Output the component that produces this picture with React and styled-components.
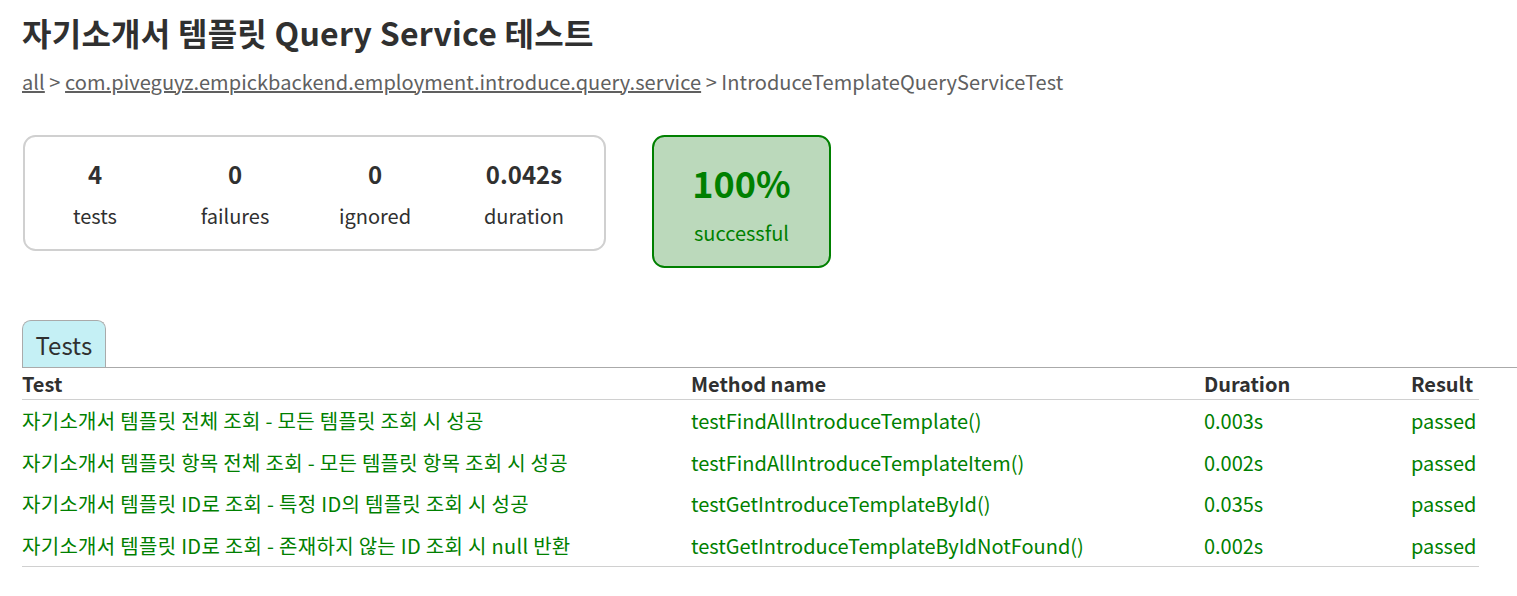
import React from "react";
import styled, { createGlobalStyle } from "styled-components";

const Global = createGlobalStyle`
  html, body {
    margin: 0;
    padding: 0;
    background: #ffffff;
  }
  body {
    font-family: "Noto Sans CJK KR", "Noto Sans", sans-serif;
    font-size: 20px;
    color: #303030;
  }
`;

const Page = styled.div`
  padding: 9px 0 0 22px;
`;

const Title = styled.h1`
  margin: 0 0 11.5px;
  font-size: 32px;
  font-weight: bold;
  white-space: nowrap;
  color: #303030;
  letter-spacing: 0.25px;
`;

const Breadcrumbs = styled.div`
  color: #606060;
  font-size: 20px;
  letter-spacing: 0.06px;
`;

const Crumb = styled.a`
  color: #606060;
  text-decoration: underline;
`;

const Summary = styled.div`
  display: flex;
  align-items: flex-start;
  gap: 46px;
  margin: 39.5px 0 52px 1px;
`;

const SummaryGroup = styled.div`
  display: flex;
  border: solid 2px #d0d0d0;
  border-radius: 12.5px;
  padding-right: 1px;
`;

const Stat = styled.div`
  width: ${(p) => (p.$wide ? "158px" : "140px")};
  padding: 18.75px 0;
  text-align: center;
`;

const Counter = styled.p`
  margin: 0 0 10px;
  font-size: 24px;
  font-weight: bold;
`;

const Label = styled.p`
  margin: 0;
`;

const SuccessBox = styled.div`
  width: 175px;
  padding: 18.75px 0;
  text-align: center;
  border: solid 2px #008000;
  border-radius: 12.5px;
  background-color: #bbd9bb;
  color: #008000;
`;

const Percent = styled.p`
  margin: 0 0 10px;
  font-size: 36px;
  font-weight: bold;
`;

const TabBar = styled.ul`
  display: flex;
  margin: 0;
  padding: 0;
  list-style: none;
  border-bottom: solid 1px #aaaaaa;
`;

const Tab = styled.li`
  padding: 6px 12.5px 5.5px;
  border: solid 1px #aaaaaa;
  border-bottom: none;
  border-radius: 8.75px 8.75px 0 0;
  background-color: #c5f0f5;
  font-size: 24px;
  color: #303030;
`;

const Table = styled.table`
  border-collapse: collapse;
  border-bottom: solid 1px #d0d0d0;
`;

const Th = styled.th`
  text-align: left;
  white-space: nowrap;
  padding: 1px 0 1px 120px;
  border-bottom: solid 1px #d0d0d0;
  font-weight: bold;
  &:first-child {
    padding-left: 0;
    width: 549px;
  }
  &:nth-child(3) {
    width: 87px;
  }
  &:last-child {
    padding-right: 3px;
  }
`;

const Td = styled.td`
  white-space: nowrap;
  padding: 6.25px 0 6.25px 120px;
  color: #008000;
  &:first-child {
    padding-left: 0;
    letter-spacing: 0.3px;
  }
  &:last-child {
    padding-right: 3px;
  }
`;

const rows = [
  ["자기소개서 템플릿 전체 조회 - 모든 템플릿 조회 시 성공", "testFindAllIntroduceTemplate()", "0.003s"],
  ["자기소개서 템플릿 항목 전체 조회 - 모든 템플릿 항목 조회 시 성공", "testFindAllIntroduceTemplateItem()", "0.002s"],
  ["자기소개서 템플릿 ID로 조회 - 특정 ID의 템플릿 조회 시 성공", "testGetIntroduceTemplateById()", "0.035s"],
  ["자기소개서 템플릿 ID로 조회 - 존재하지 않는 ID 조회 시 null 반환", "testGetIntroduceTemplateByIdNotFound()", "0.002s"],
];

const stats = [
  ["4", "tests"],
  ["0", "failures"],
  ["0", "ignored"],
  ["0.042s", "duration", true],
];

export default function App() {
  return (
    <>
      <Global />
      <Page>
        <Title>자기소개서 템플릿 Query Service 테스트</Title>
        <Breadcrumbs>
          <Crumb href="#">all</Crumb> &gt;{" "}
          <Crumb href="#">com.piveguyz.empickbackend.employment.introduce.query.service</Crumb> &gt;
          IntroduceTemplateQueryServiceTest
        </Breadcrumbs>
        <Summary>
          <SummaryGroup>
            {stats.map(([v, l, wide]) => (
              <Stat key={l} $wide={wide}>
                <Counter>{v}</Counter>
                <Label>{l}</Label>
              </Stat>
            ))}
          </SummaryGroup>
          <SuccessBox>
            <Percent>100%</Percent>
            <Label>successful</Label>
          </SuccessBox>
        </Summary>
        <TabBar>
          <Tab>Tests</Tab>
        </TabBar>
        <Table>
          <thead>
            <tr>
              <Th>Test</Th>
              <Th>Method name</Th>
              <Th>Duration</Th>
              <Th>Result</Th>
            </tr>
          </thead>
          <tbody>
            {rows.map(([name, method, dur]) => (
              <tr key={method}>
                <Td>{name}</Td>
                <Td>{method}</Td>
                <Td>{dur}</Td>
                <Td>passed</Td>
              </tr>
            ))}
          </tbody>
        </Table>
      </Page>
    </>
  );
}
